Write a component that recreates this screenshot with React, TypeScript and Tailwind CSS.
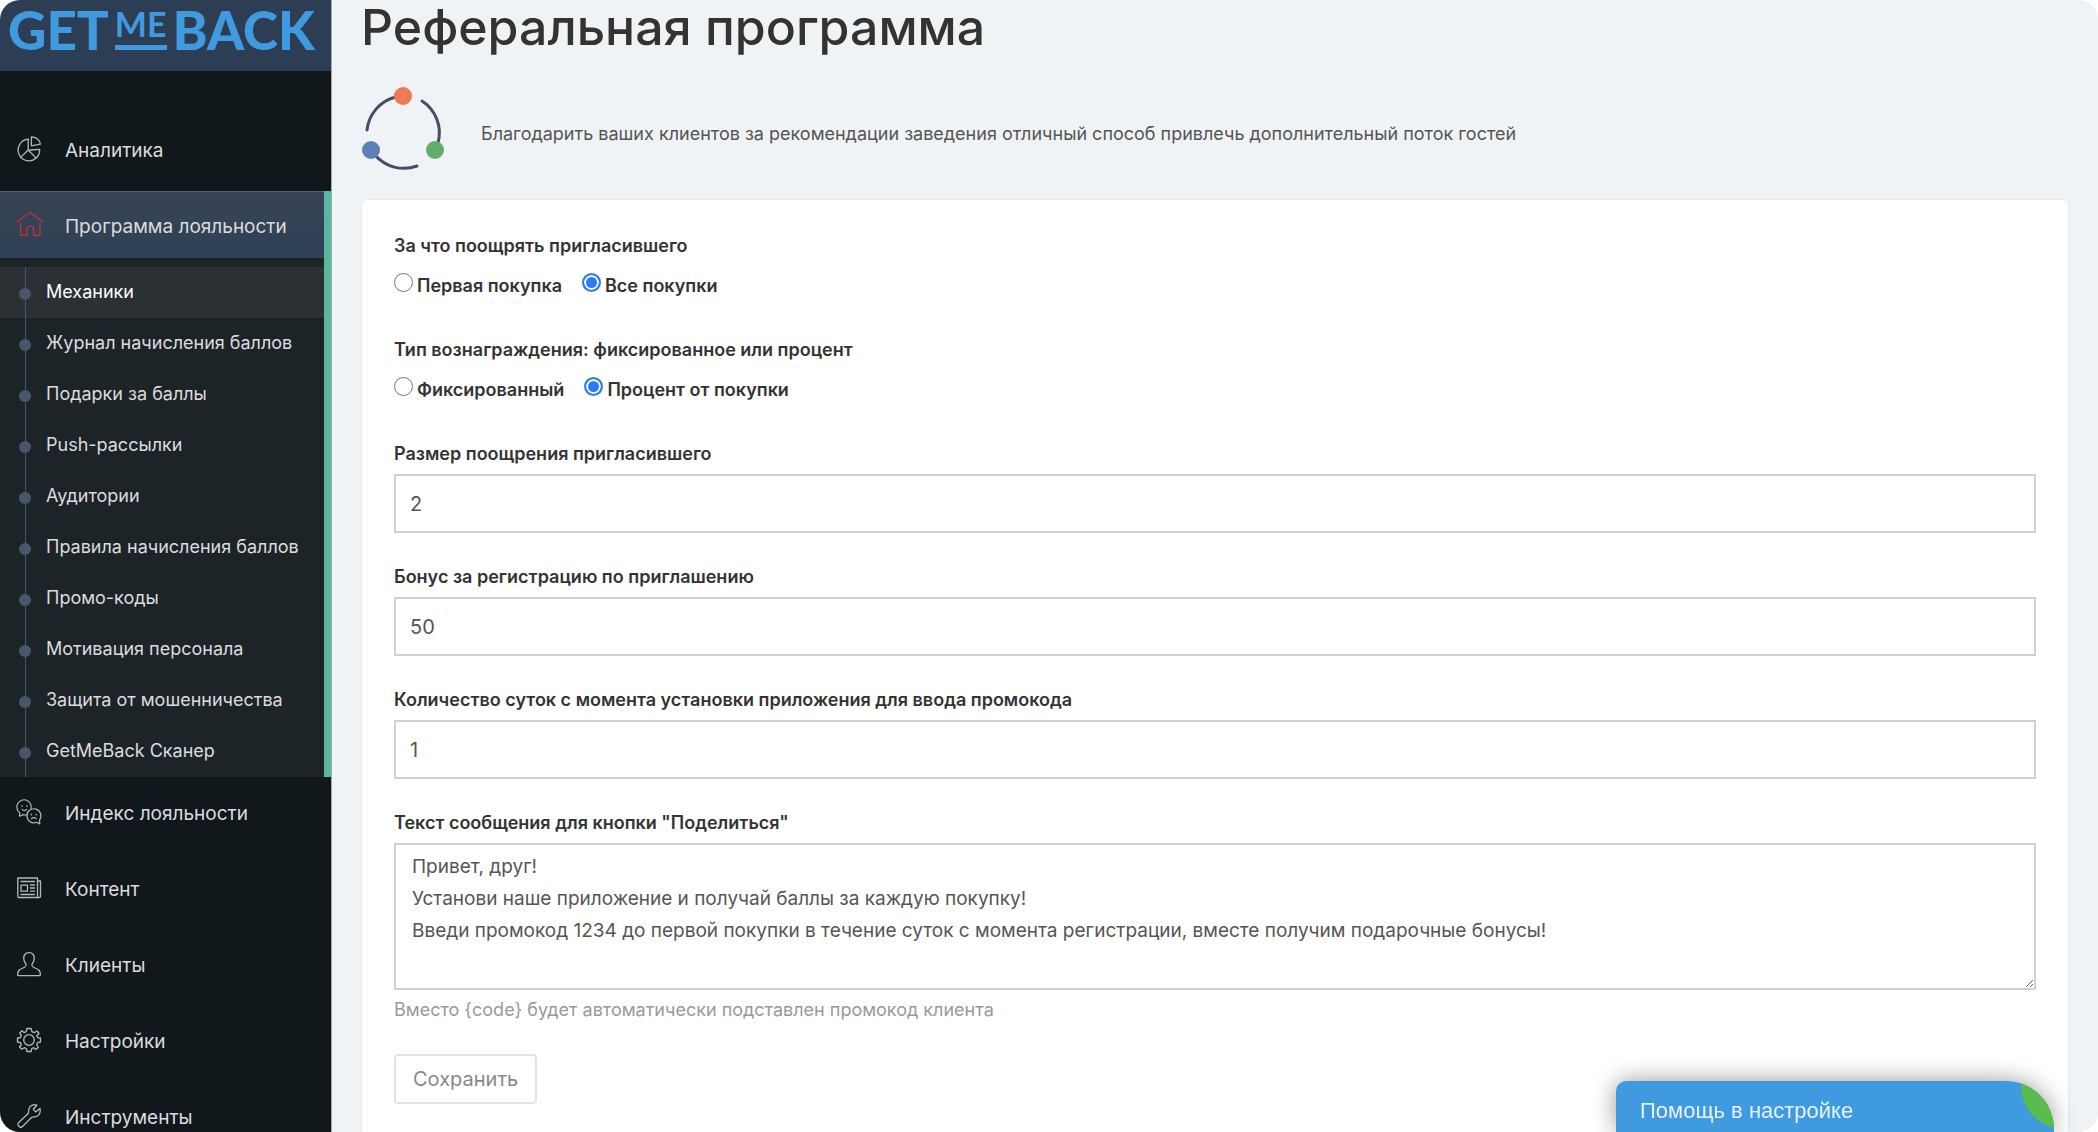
import { useState } from "react"

const subItems = [
    "Механики",
    "Журнал начисления баллов",
    "Подарки за баллы",
    "Push-рассылки",
    "Аудитории",
    "Правила начисления баллов",
    "Промо-коды",
    "Мотивация персонала",
    "Защита от мошенничества",
    "GetMeBack Сканер",
]

const Icon: React.FC<any> = ({ children, className = "text-[#b4b8ba]" }) => (
    <svg
        className={`w-7 h-7 shrink-0 ${className}`}
        viewBox="0 0 28 28"
        fill="none"
        stroke="currentColor"
        strokeWidth="1.3"
        strokeLinecap="round"
        strokeLinejoin="round"
        aria-hidden="true"
    >
        {children}
    </svg>
)

const PieIcon = () => (
    <Icon>
        <path d="M13.2 4.2V15L21.2 23.1A11 11 0 0 0 24.6 14.3L15 15" />
        <path d="M13.2 4.2A10.8 10.8 0 1 0 21.2 23M13.2 15L5.6 22.4" />
        <path d="M16.4 1.8V10.8L25.4 9.2C25 5 21.2 1.8 16.4 1.8Z" />
    </Icon>
)

const HomeIcon = () => (
    <Icon className="text-[#c9302c]">
        <path d="M2.5 10.5L15 1.5L27.3 10.5" />
        <path d="M5.5 12.5V24.3H12V18.5A3.3 3.3 0 0 1 18.6 18.5V24.3H25V12.5" />
    </Icon>
)

const FacesIcon = () => (
    <Icon>
        <path d="M4.8 14.8A7.2 7.2 0 1 1 16 10.8M4.8 14.8L4.5 18.2L7.8 16.7Q10 17.3 12 16.7" strokeWidth="1.2" />
        <path d="M21.5 24.3A7 7 0 1 1 24.5 22L24.8 26L21.5 24.3" strokeWidth="1.2" />
        <path d="M7 7.5V8.5M12 7.5V8.5M7.2 11.5Q9.5 13.5 11.8 11.5M16.3 16V17M21.2 16V17M16.3 20.7Q18.8 18.5 21.2 20.7" strokeWidth="1.1" />
    </Icon>
)

const NewsIcon = () => (
    <Icon>
        <path d="M2.8 4H22.5V23.5H4Q2.8 23.5 2.8 22.3Z" />
        <path d="M22.5 7H25.5V22.3Q25.5 23.5 24.3 23.5H22.5" />
        <path d="M6 7.5H19.5M6 20.5H19.5M15.5 11H19.5M15.5 14H19.5M15.5 17.2H19.5M6 11.2H12.5V17.2H6Z" />
    </Icon>
)

const UserIcon = () => (
    <Icon>
        <path d="M14 2.6C10.5 2.6 8.5 5 8.7 8.5C8.9 11.5 10 13 11 14.2C11.3 16.5 10.5 17 8 18C4.5 19.3 2.6 20.5 2.6 24.8Q2.6 25.6 3.5 25.6H24.5Q25.4 25.6 25.4 24.8C25.4 20.5 23.5 19.3 20 18C17.5 17 16.7 16.5 17 14.2C18 13 19.1 11.5 19.3 8.5C19.5 5 17.5 2.6 14 2.6Z" />
    </Icon>
)

const GearIcon = () => (
    <Icon>
        <circle cx="14" cy="14" r="5.3" />
        <path d="M11.9 2.5H16.1L16.9 5.7L19.2 6.7L22 5L24 7.5L21.8 9.7L22.8 11.7L25.5 12V16L22.6 16.6L21.7 18.7L23.3 21.5L20.7 23.5L18.7 21.7L16.8 22.5L16.1 25.5H12L11.2 22.5L9.3 21.7L6.7 23.2L4.5 20.7L6.3 18.7L5.5 16.6L2.5 16V12L5.4 11.5L6.4 9.5L4.6 7.2L7 4.7L9 6.6L11.2 5.7Z" />
    </Icon>
)

const WrenchIcon = () => (
    <Icon>
        <path d="M21.8 3.2L18.3 7.2L20.7 9.9L25 6.5C26 10 24.3 14.3 20.5 14.8C18.8 15 17.5 14.8 16.8 15.3L7.5 24.5C5.5 26.5 1.3 23 3.5 20.7L13.2 11.5C13.7 10.5 13.2 8.5 14.2 6.2C15.5 3.2 18.8 2 21.8 3.2Z" />
    </Icon>
)

const bottomItems = [
    { name: "Индекс лояльности", icon: <FacesIcon /> },
    { name: "Контент", icon: <NewsIcon /> },
    { name: "Клиенты", icon: <UserIcon /> },
    { name: "Настройки", icon: <GearIcon /> },
    { name: "Инструменты", icon: <WrenchIcon /> },
]

const Logo = () => (
    <a href="#" className="flex items-start h-[71px] shrink-0 pl-2 bg-[#2d3d53] text-[#409adf] font-[Lato,sans-serif] font-black">
        <span className="text-[53px] leading-[60px]">GET</span>
        <span className="mx-[6px] mt-2 h-[42px] shrink-0 border-b-[5px] border-[#409adf] text-[34px] leading-8 font-bold">ME</span>
        <span className="text-[53px] leading-[60px]">BACK</span>
    </a>
)

const MenuItem: React.FC<any> = ({ name, icon }) => (
    <a href="#" className="flex items-center h-[76px] shrink-0 pl-[15px] pb-[6px] text-[19px] text-[#dcdcdc]">
        {icon}
        <span className="ml-[22px] pt-1">{name}</span>
    </a>
)

const Sidebar = () => (
    <nav className="w-[332px] shrink-0 flex flex-col overflow-y-auto [scrollbar-width:none] bg-[#10181b] border-r border-[#a3a9ad]">
        <Logo />
        <div className="shrink-0 pt-[43px] pb-px">
            <MenuItem name="Аналитика" icon={<PieIcon />} />
        </div>
        <div className="shrink-0 border-r-[7px] border-[#58b79c]">
            <a href="#" className="flex items-center h-[67px] pl-[15px] border-t border-[#536070] bg-linear-to-b from-[#384354] to-[#2f4257] text-[19px] text-[#dcdcdc]">
                <HomeIcon />
                <span className="ml-[22px] pt-1">Программа лояльности</span>
            </a>
            <ul className="pt-[9px] bg-[#1d2428]">
                {subItems.map((name, i) => (
                    <li key={name}>
                        <a
                            href="#"
                            className={i == 0 ? "flex h-[51px] items-center bg-[#2a3034] text-white" : "flex h-[51px] items-center text-[#dcdcdc]"}
                        >
                            <span className="relative flex w-[46px] h-full pl-[25px]">
                                <span className="w-px h-full bg-[#48566a]" />
                                <span className="absolute left-[19px] top-[21px] w-3 h-3 rounded-full bg-[#48566a]" />
                            </span>
                            <span className="text-lg pb-px">{name}</span>
                        </a>
                    </li>
                ))}
            </ul>
        </div>
        {bottomItems.map((item) => (
            <MenuItem key={item.name} name={item.name} icon={item.icon} />
        ))}
    </nav>
)

const ReferralIcon = () => (
    <svg className="w-[84px] h-[86px] shrink-0" viewBox="0 0 84 86" fill="none" stroke="#454f63" strokeWidth="3" strokeLinecap="round" aria-hidden="true">
        <path d="M35 10A38 38 0 0 0 6 43" />
        <path d="M61 14A38 38 0 0 1 77 56" />
        <path d="M14 68A38 38 0 0 0 56 79" />
        <circle cx="42" cy="9" r="9" fill="#ee7a55" stroke="none" />
        <circle cx="10" cy="63" r="9" fill="#5d81b5" stroke="none" />
        <circle cx="74" cy="63" r="9" fill="#62ad67" stroke="none" />
    </svg>
)

const RadioGroup: React.FC<any> = ({ legend, name, options, value, setValue }) => (
    <fieldset className="mb-6">
        <legend className="font-semibold leading-6">{legend}</legend>
        <div className="flex items-center gap-5 h-14">
            {options.map((option: string) => (
                <label key={option} className="flex items-center gap-1 font-semibold">
                    <input
                        type="radio"
                        name={name}
                        checked={value == option}
                        onChange={() => setValue(option)}
                        className="appearance-none w-[19px] h-[19px] mb-2 rounded-full border border-[#767676] bg-white checked:border-2 checked:border-[#2b7bf6] checked:bg-[#2b7bf6] checked:shadow-[inset_0_0_0_2px_white]"
                    />
                    <span>{option}</span>
                </label>
            ))}
        </div>
    </fieldset>
)

const TextField: React.FC<any> = ({ id, label, defaultValue }) => (
    <div className="mb-8">
        <label htmlFor={id} className="block mb-2 font-semibold leading-6">{label}</label>
        <input
            id={id}
            type="text"
            defaultValue={defaultValue}
            className="block w-full h-[59px] px-[14px] border-2 border-[#d0d2d2] bg-white text-xl text-[#555] outline-none"
        />
    </div>
)

const message = `Привет, друг!
Установи наше приложение и получай баллы за каждую покупку!
Введи промокод 1234 до первой покупки в течение суток с момента регистрации, вместе получим подарочные бонусы!`

const App = () => {
    const [target, setTarget] = useState("Все покупки")
    const [kind, setKind] = useState("Процент от покупки")

    return (
        <div className="flex h-screen overflow-hidden rounded-[20px] bg-[#eff3f6] font-[Inter,sans-serif] text-[#333]">
            <Sidebar />
            <main className="flex-1 min-w-0 overflow-y-auto [scrollbar-width:none] px-[29px]">
                <h1 className="text-[50px] leading-[54px] font-medium">Реферальная программа</h1>
                <div className="flex items-center gap-9 mt-[33px] mb-[26px]">
                    <ReferralIcon />
                    <p className="text-lg pt-2 text-[#555]">
                        Благодарить ваших клиентов за рекомендации заведения отличный способ привлечь дополнительный поток гостей
                    </p>
                </div>
                <form className="px-8 pt-[34px] pb-20 rounded-md border border-[#e7eaed] bg-white text-lg" onSubmit={(e) => e.preventDefault()}>
                    <RadioGroup
                        legend="За что поощрять пригласившего"
                        name="target"
                        options={["Первая покупка", "Все покупки"]}
                        value={target}
                        setValue={setTarget}
                    />
                    <RadioGroup
                        legend="Тип вознаграждения: фиксированное или процент"
                        name="kind"
                        options={["Фиксированный", "Процент от покупки"]}
                        value={kind}
                        setValue={setKind}
                    />
                    <TextField id="reward" label="Размер поощрения пригласившего" defaultValue="2" />
                    <TextField id="bonus" label="Бонус за регистрацию по приглашению" defaultValue="50" />
                    <TextField id="days" label="Количество суток с момента установки приложения для ввода промокода" defaultValue="1" />
                    <label htmlFor="message" className="block mb-2 font-semibold leading-6">Текст сообщения для кнопки "Поделиться"</label>
                    <textarea
                        id="message"
                        defaultValue={message}
                        className="block w-full h-[147px] px-4 py-[6px] border-2 border-[#d0d2d2] bg-white text-[19px] leading-8 text-[#555] outline-none"
                    />
                    <p className="mt-2 text-lg leading-6 text-[#999]">Вместо {"{code}"} будет автоматически подставлен промокод клиента</p>
                    <button type="submit" className="mt-8 h-[50px] px-[17px] rounded border-2 border-[#e2e2e2] bg-white text-xl text-[#888]">
                        Сохранить
                    </button>
                </form>
            </main>
            <button
                type="button"
                className="fixed right-11 bottom-0 w-[438px] h-[51px] pl-6 pt-2 overflow-hidden rounded-tl-[10px] rounded-tr-[48px] bg-[#409adf] text-left text-[22px] text-[#e6f2fb] font-['Liberation_Sans',sans-serif] shadow-[0_0_24px_rgba(0,0,0,0.4)]"
            >
                Помощь в настройке
                <span className="absolute left-[405px] -top-[38px] w-[86px] h-[86px] rounded-full bg-[#5bbc4e]" />
            </button>
        </div>
    )
}

export default App
